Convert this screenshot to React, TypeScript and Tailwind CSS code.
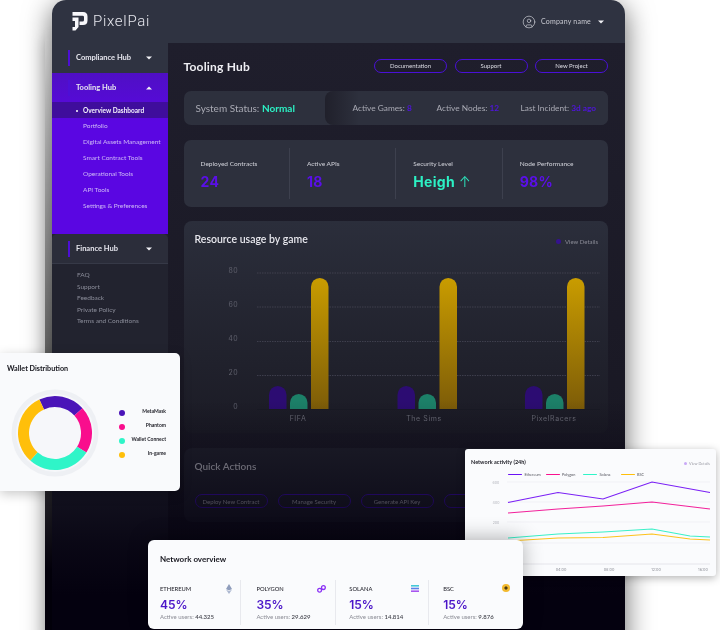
import { CircleUser } from "lucide-react";

const Caret = ({ up = false, className = "" }: { up?: boolean; className?: string }) => (
  <svg width="6" height="4" viewBox="0 0 6 4" className={className}>
    <path d={up ? "M0 3.5 L3 0.5 L6 3.5 Z" : "M0 0.5 L6 0.5 L3 3.5 Z"} fill="#f2f2f6" />
  </svg>
);

const HubRow = ({ label, up, className }: { label: string; up?: boolean; className: string }) => (
  <div className={`flex items-center pl-4 pr-4 ${className}`}>
    <span className="w-[1.5px] h-[16px] bg-[#4d0fd6] mr-[6.5px]" />
    <span className="text-[7.5px] font-bold text-[#e6e6ee] flex-1">{label}</span>
    <Caret up={up} />
  </div>
);

const subItems = ["Portfolio", "Digital Assets Management", "Smart Contract Tools", "Operational Tools", "API Tools", "Settings & Preferences"];
const footerLinks = ["FAQ", "Support", "Feedback", "Private Policy", "Terms and Conditions"];

const Sidebar = () => (
  <aside className="w-[116px] shrink-0 bg-[#22232f] flex flex-col">
    <HubRow label="Compliance Hub" className="h-[30px] bg-[#2f3341]" />
    <div className="bg-gradient-to-b from-[#4f0fc4] to-[#5a06e2] to-[30%] h-[161px]">
      <HubRow label="Tooling Hub" up className="h-[29px] pt-[1px]" />
      <div className="h-[16px] bg-[#3f0d9c] flex items-center pl-[24px] pt-[1px] text-[6.5px] font-bold text-[#f4f2fb]">
        <span className="w-[2px] h-[2px] rounded-full bg-white mr-[5px]" />
        Overview Dashboard
      </div>
      {subItems.map((s) => (
        <div key={s} className="h-[16px] flex items-center pl-[31px] text-[6.5px] text-[#cdb8f6]">{s}</div>
      ))}
    </div>
    <HubRow label="Finance Hub" className="h-[30px] pt-[1px] bg-[#2b2d3a] rounded-t-[5px] border-b border-[#363947]" />
    <div className="pt-[5px] pl-[25px] flex flex-col">
      {footerLinks.map((s) => (
        <div key={s} className="h-[11.6px] flex items-center text-[6.5px] text-[#8b8d9a]">{s}</div>
      ))}
    </div>
  </aside>
);

const OutlineButton = ({ label, className = "" }: { label: string; className?: string }) => (
  <div className={`w-[73px] h-[14px] rounded-full border flex items-center justify-center text-[6px] ${className}`}>{label}</div>
);

const Stat = ({ label, value, color, arrow }: { label: string; value: string; color: string; arrow?: boolean }) => (
  <div className="flex-1 h-[51px] border-r border-[#3d404e] last:border-r-0 pl-[17px] pt-[11px]">
    <div className="text-[6.5px] font-medium text-[#c9cad2] leading-[10px]">{label}</div>
    <div className={`text-[14px] font-bold leading-[20px] mt-[3px] font-['Inter',sans-serif] tracking-[0.3px] ${color}`}>
      {value}
      {arrow && <span className="font-light ml-[4px]">↑</span>}
    </div>
  </div>
);

const ResourceChart = () => {
  const groups = [
    { x: 85, label: "FIFA", lx: 114 },
    { x: 213.5, label: "The Sims", lx: 240 },
    { x: 341, label: "PixelRacers", lx: 370 },
  ];
  const ys = [
    { v: "80", y: 10.5 },
    { v: "60", y: 44.5 },
    { v: "40", y: 79 },
    { v: "20", y: 113 },
    { v: "0", y: 147 },
  ];
  const bar = (x: number, top: number, w: number, fill: string) => {
    const b = 147;
    return <path d={`M${x} ${b} V${top + w / 2} A${w / 2} ${w / 2} 0 0 1 ${x + w} ${top + w / 2} V${b} Z`} fill={fill} />;
  };
  return (
    <svg width="424" height="170" viewBox="0 0 424 170" className="block">
      <defs>
        <linearGradient id="gold" x1="0" y1="0" x2="0" y2="1">
          <stop offset="0" stopColor="#c99c00" />
          <stop offset="1" stopColor="#7d5c08" />
        </linearGradient>
      </defs>
      {ys.map((t) => (
        <g key={t.v}>
          <text x="54" y={t.y} textAnchor="end" fontSize="7" letterSpacing="0.4" fill="#5e5f6b" fontFamily="Inter, sans-serif">{t.v}</text>
          <line x1="73" x2="416" y1={t.y + 0.5} y2={t.y + 0.5} stroke={t.v === "0" ? "#191a24" : "#4a4c5a"} strokeWidth="0.7" strokeDasharray={t.v === "0" ? undefined : "1.5 1"} />
        </g>
      ))}
      {groups.map((g) => (
        <g key={g.label}>
          {bar(g.x, 124, 17.5, "#2c0c72")}
          {bar(g.x + 21, 132, 17.5, "#1c8068")}
          {bar(g.x + 42, 16, 17.5, "url(#gold)")}
          <text x={g.lx} y="158.5" textAnchor="middle" fontSize="7" letterSpacing="0.6" fill="#6a6b76" fontFamily="Inter, sans-serif">{g.label}</text>
        </g>
      ))}
    </svg>
  );
};

const Main = () => (
  <main className="flex-1 min-w-0 pl-[15.5px] pr-[17px] pt-[14px] bg-gradient-to-b from-[#1f1e2c] to-[#16151f]">
    <div className="flex items-center justify-between h-[20px]">
      <h1 className="text-[12px] font-bold text-[#eeeef3] tracking-[0.2px]">Tooling Hub</h1>
      <div className="flex gap-[7.5px] text-[#dcdce4] -mt-[3px]">
        <OutlineButton label="Documentation" className="border-[#4a10d8]" />
        <OutlineButton label="Support" className="border-[#4a10d8]" />
        <OutlineButton label="New Project" className="border-[#4a10d8]" />
      </div>
    </div>
    <section className="mt-[14px] h-[34px] rounded-[7px] bg-[#2d303d] flex overflow-hidden text-[#a9aab4]">
      <div className="w-[141px] pl-[12px] flex items-center text-[10px]">
        System Status:&nbsp;<span className="text-[#2cf0c4] font-bold">Normal</span>
      </div>
      <div className="flex-1 rounded-l-[8px] bg-gradient-to-r from-[#20202b] to-[#2d303d] to-[12%] flex items-center text-[8.3px] pl-[28px]">
        <span className="w-[84px]">Active Games: <b className="text-[#4f14dc]">8</b></span>
        <span className="w-[84px]">Active Nodes: <b className="text-[#4f14dc]">12</b></span>
        <span>Last Incident: <b className="text-[#4f14dc]">3d ago</b></span>
      </div>
    </section>
    <section className="mt-[15px] h-[67px] rounded-[7px] bg-[#2d303d] flex items-center">
      <Stat label="Deployed Contracts" value="24" color="text-[#5a0fe8]" />
      <Stat label="Active APIs" value="18" color="text-[#5a0fe8]" />
      <Stat label="Security Level" value="Heigh" arrow color="text-[#2cf0c4]" />
      <Stat label="Node Performance" value="98%" color="text-[#5a0fe8]" />
    </section>
    <section className="mt-[14px] h-[212px] rounded-[8px] bg-gradient-to-b from-[#2b2e3b] to-[#1b1b25]">
      <div className="flex items-center justify-between pl-[11px] pr-[10px] h-[41px] pb-[4px]">
        <h2 className="text-[10.5px] font-semibold text-[#e8e8ee]">Resource usage by game</h2>
        <div className="flex items-center gap-[4px] text-[6px] text-[#8a8b96] mt-[4px]">
          <span className="w-[5px] h-[5px] rounded-full bg-[#35128f]" />
          View Details
        </div>
      </div>
      <ResourceChart />
    </section>
    <section className="mt-[15px] h-[74px] rounded-[8px] bg-[#20212c] pl-[11px] pt-[11px]">
      <h2 className="text-[10px] font-semibold text-[#a8a8b0]">Quick Actions</h2>
      <div className="flex gap-[10px] mt-[20px] text-[#b0b0b8]">
        <OutlineButton label="Deploy New Contract" className="border-[#3d10b0]" />
        <OutlineButton label="Manage Security" className="border-[#3d10b0]" />
        <OutlineButton label="Generate API Key" className="border-[#3d10b0]" />
        <OutlineButton label="View Logs" className="border-[#3d10b0]" />
      </div>
    </section>
  </main>
);

const arc = (a0: number, a1: number, r: number, R: number, cx: number, cy: number) => {
  const p = (a: number, q: number) => {
    const t = ((a - 90) * Math.PI) / 180;
    return `${(cx + q * Math.cos(t)).toFixed(2)} ${(cy + q * Math.sin(t)).toFixed(2)}`;
  };
  const l = a1 - a0 > 180 ? 1 : 0;
  return `M${p(a0, R)} A${R} ${R} 0 ${l} 1 ${p(a1, R)} L${p(a1, r)} A${r} ${r} 0 ${l} 0 ${p(a0, r)} Z`;
};

const WalletCard = () => {
  const legend = [
    { l: "MetaMask", c: "bg-[#4a14b8]" },
    { l: "Phantom", c: "bg-[#f90e8d]" },
    { l: "Wallet Connect", c: "bg-[#2ff5c8]" },
    { l: "In-game", c: "bg-[#ffbf0a]" },
  ];
  return (
    <div className="absolute left-0 top-[353px] w-[180px] h-[138px] bg-[#f9fafc] rounded-r-[5px] shadow-[0_3px_12px_rgba(0,0,0,0.22)]">
      <div className="pl-[7px] pt-[11px] text-[7.2px] font-bold text-[#15151c] leading-[10px]">Wallet Distribution</div>
      <div className="flex items-center mt-[15px] pl-[11px]">
        <svg width="88" height="88" viewBox="0 0 88 88">
          <circle cx="44" cy="44" r="43.5" fill="#eef0f4" />
          <circle cx="44" cy="44" r="39" fill="#f6f7fa" />
          <path d={arc(-25, 48, 26, 37, 44, 44)} fill="#4a14b8" />
          <path d={arc(48, 122, 26, 37, 44, 44)} fill="#f90e8d" />
          <path d={arc(122, 222, 26, 37, 44, 44)} fill="#2ff5c8" />
          <path d={arc(222, 335, 26, 37, 44, 44)} fill="#ffbf0a" />
        </svg>
        <div className="ml-[20px] w-[47px] flex flex-col gap-[4px] mt-[2px]">
          {legend.map((x) => (
            <div key={x.l} className="h-[10px] flex items-center justify-between">
              <span className={`w-[5.5px] h-[5.5px] rounded-full ${x.c}`} />
              <span className="text-[5px] font-bold text-[#22222a] -mt-[2px]">{x.l}</span>
            </div>
          ))}
        </div>
      </div>
    </div>
  );
};

const ActivityChart = () => {
  const line = (pts: number[][], c: string) => (
    <polyline points={pts.map((p) => `${p[0] - 465},${p[1] - 481}`).join(" ")} fill="none" stroke={c} strokeWidth="1.2" />
  );
  return (
    <svg width="251" height="92" viewBox="0 0 251 92" className="block">
      {[1, 21, 41, 62].map((y) => (
        <line key={y} x1="42" x2="245" y1={y} y2={y} stroke="#eceef2" strokeWidth="0.7" />
      ))}
      <line x1="42" x2="245" y1="83" y2="83" stroke="#dfe1e6" strokeWidth="0.8" />
      {[["600", 2.5], ["400", 22.5], ["200", 42.5]].map(([t, y]) => (
        <text key={t} x="31" y={y as number} textAnchor="middle" fontSize="3.6" fill="#b4b6bd" fontFamily="Inter, sans-serif">{t}</text>
      ))}
      {[["04:00", 96], ["08:00", 144], ["12:00", 191], ["16:00", 238]].map(([t, x]) => (
        <text key={t} x={x as number} y="90" textAnchor="middle" fontSize="3.8" fill="#8d8f97" fontFamily="Inter, sans-serif">{t}</text>
      ))}
      {line([[508, 502.5], [558, 492.5], [603, 499], [652, 482], [710, 492.5]], "#7a1ff5")}
      {line([[508, 513], [558, 509], [603, 506], [652, 502], [710, 509]], "#f2219b")}
      {line([[508, 538], [558, 534], [603, 532], [652, 529], [690, 536], [710, 537]], "#3bf0c8")}
      {line([[508, 541], [558, 538], [603, 537.5], [652, 534], [690, 539], [710, 540]], "#fdc21c")}
    </svg>
  );
};

const ActivityCard = () => {
  const legend = [
    { l: "Ethereum", c: "bg-[#6a11f5]" },
    { l: "Polygon", c: "bg-[#f9108e]" },
    { l: "Solana", c: "bg-[#2ff5c8]" },
    { l: "BSC", c: "bg-[#ffbf0a]" },
  ];
  return (
    <div className="absolute left-[465px] top-[449px] w-[251px] h-[127px] bg-[#fafbfd] rounded-[3px] shadow-[0_2px_8px_rgba(0,0,0,0.3)]">
      <div className="flex justify-between pl-[6px] pr-[6px] pt-[10px] h-[21px]">
        <span className="text-[5.5px] font-bold text-[#1c1c24] leading-[7px]">Network activity (24h)</span>
        <span className="flex items-center gap-[2px] text-[3.8px] text-[#9a9ba4] h-[9px]">
          <span className="w-[3.5px] h-[3.5px] rounded-full bg-[#c9a9f7]" />
          View Details
        </span>
      </div>
      <div className="flex h-[9px] items-center pl-[43px] text-[3.8px] text-[#55565f]">
        {legend.map((x) => (
          <span key={x.l} className="w-[37.5px] flex items-center gap-[2.5px]">
            <span className={`w-[14px] h-[1.6px] rounded-full ${x.c}`} />
            {x.l}
          </span>
        ))}
      </div>
      <div className="mt-[2px]">
        <ActivityChart />
      </div>
    </div>
  );
};

const EthIcon = () => (
  <svg width="6" height="10" viewBox="0 0 6 10" className="block">
    <path d="M3 0 L6 4.9 L3 6.5 L0 4.9 Z" fill="#8f9dbc" />
    <path d="M0 5.6 L3 7.3 L6 5.6 L3 10 Z" fill="#a9b5cf" />
  </svg>
);
const PolyIcon = () => (
  <svg width="9" height="8" viewBox="0 0 9 8" className="block" fill="none" stroke="#8a2ff5" strokeWidth="1.3">
    <circle cx="2.6" cy="5.3" r="1.9" />
    <circle cx="6.4" cy="2.6" r="1.9" />
  </svg>
);
const SolIcon = () => (
  <svg width="8" height="7" viewBox="0 0 8 7" className="block">
    <rect x="0" y="0" width="8" height="1.6" fill="#45c8d8" />
    <rect x="0" y="2.7" width="8" height="1.6" fill="#5f7fe8" />
    <rect x="0" y="5.4" width="8" height="1.6" fill="#a855f0" />
  </svg>
);
const BscIcon = () => (
  <svg width="8" height="8" viewBox="0 0 8 8" className="block">
    <circle cx="4" cy="4" r="4" fill="#f3ba2f" />
    <path d="M4 2 L6 4 L4 6 L2 4 Z" fill="#4a3a14" />
  </svg>
);

const NetCol = ({ name, pct, users, icon, w, iconClass }: { name: string; pct: string; users: string; icon: React.ReactNode; w: string; iconClass: string }) => (
  <div className={`relative h-[45px] border-r border-[#e8e9ee] last:border-r-0 ${w}`}>
    <div className="text-[5.8px] font-medium text-[#2a2a33] leading-[8px] pt-[5px] h-[13px]">{name}</div>
    <div className="text-[12px] font-semibold text-[#4a14c8] leading-[16px] mt-[4px] font-['Inter',sans-serif]">{pct}</div>
    <div className="text-[6px] text-[#8a8b94] leading-[8px]">Active users: <span className="font-semibold text-[#45464f]">{users}</span></div>
    <span className={`absolute ${iconClass}`}>{icon}</span>
  </div>
);

const NetworkCard = () => (
  <div className="absolute left-[148px] top-[540px] w-[375px] h-[89px] bg-[#fafbfd] rounded-[6px] shadow-[0_-2px_20px_rgba(0,0,0,0.3)] pl-[12px] pr-[12px] pt-[14px]">
    <h3 className="text-[8px] font-bold text-[#17171f] leading-[11px]">Network overview</h3>
    <div className="flex mt-[15px]">
      <NetCol name="ETHEREUM" pct="45%" users="44.325" icon={<EthIcon />} w="w-[81.5px]" iconClass="left-[66px] top-[4px]" />
      <div className="w-[15px]" />
      <NetCol name="POLYGON" pct="35%" users="29.629" icon={<PolyIcon />} w="w-[80px]" iconClass="left-[61px] top-[5px]" />
      <div className="w-[13px]" />
      <NetCol name="SOLANA" pct="15%" users="14.814" icon={<SolIcon />} w="w-[80px]" iconClass="left-[62px] top-[5px]" />
      <div className="w-[14px]" />
      <NetCol name="BSC" pct="15%" users="9.876" icon={<BscIcon />} w="w-[68px]" iconClass="left-[59px] top-[4px]" />
    </div>
  </div>
);

export default function App() {
  return (
    <div className="relative w-[720px] h-[630px] overflow-hidden bg-white font-['Lato',sans-serif] blur-[0.4px]">
      <div className="absolute left-[45px] top-[30px] w-[570px] h-[600px] bg-gradient-to-b from-black/0 via-black/50 via-50% to-[#04010f] to-90% shadow-[-2px_10px_14px_rgba(0,0,0,0.15)]" />
      <div className="relative ml-[52px] w-[573px] h-[660px] rounded-t-[14px] overflow-hidden shadow-[0_6px_28px_rgba(0,0,0,0.6)] flex flex-col">
        <header className="h-[43px] shrink-0 bg-[#2f3341] flex items-center pl-[20px] pr-[21px]">
          <svg width="16" height="19" viewBox="0 0 16 19">
            <path d="M0.5 0 H11 Q15.5 0 15.5 4.5 V8.5 Q15.5 13 11 13 H7.5 V9.5 H10.5 Q12 9.5 12 8 V5 Q12 3.8 10.5 3.8 H0.5 Z M0.5 5.5 H6.5 V15 L3.5 18.5 H0.5 V15 H3 V9 H0.5 Z" fill="#f8f8fb" />
          </svg>
          <span className="ml-[5px] text-[15px] font-light tracking-[0.7px] text-[#e6e7ee] font-['Roboto',sans-serif]">PixelPai</span>
          <div className="flex-1" />
          <CircleUser size={14} strokeWidth={1.1} color="#d8d9e0" />
          <span className="ml-[5px] text-[7px] tracking-[0.2px] text-[#c9cad2]">Company name</span>
          <Caret className="ml-[7px]" />
        </header>
        <div className="flex flex-1 min-h-0">
          <Sidebar />
          <Main />
        </div>
        <div className="absolute left-0 right-0 bottom-0 h-[260px] bg-gradient-to-b from-transparent via-[#04010f]/80 via-55% to-[#04010f] to-75%" />
      </div>
      <WalletCard />
      <ActivityCard />
      <NetworkCard />
    </div>
  );
}
